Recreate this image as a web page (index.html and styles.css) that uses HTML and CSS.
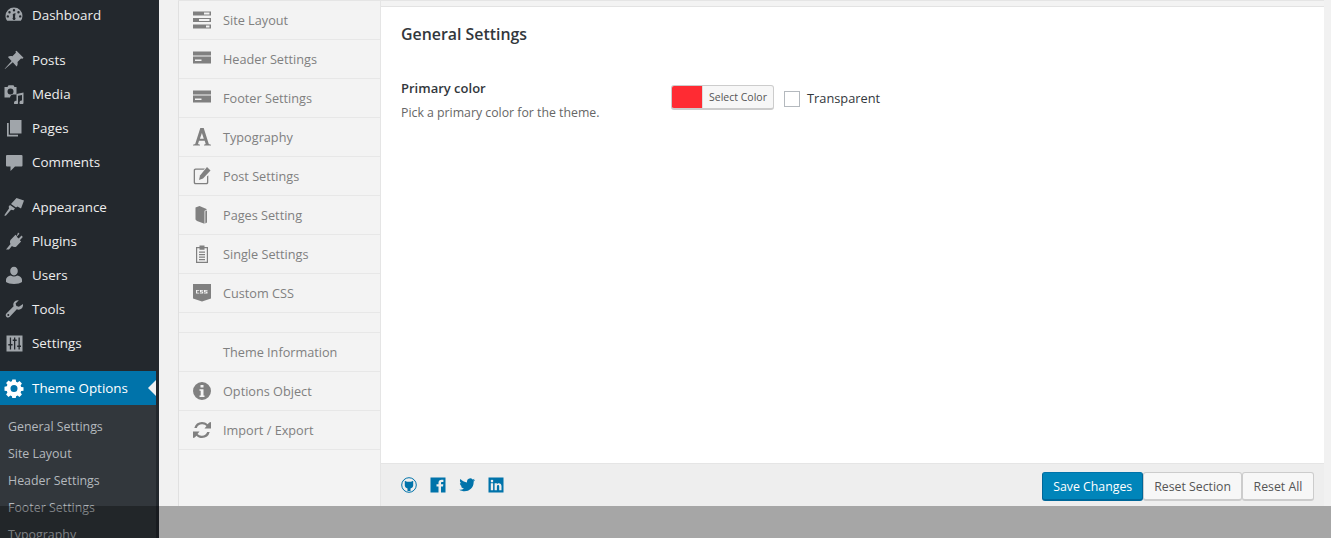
FILE: index.html
```html
<!DOCTYPE html>
<html lang="en">
<head>
<meta charset="utf-8">
<title>General Settings</title>
<link rel="stylesheet" href="styles.css">
</head>
<body>
<div class="page">
  <aside class="sidebar">
    <ul class="menu">
      <li class="item"><svg class="mi" viewBox="0 0 20 20"><path fill-rule="evenodd" d="M10 2.500a8.500 8.500 0 0 0-8.500 8.500c0 1.900.6 3.500 1.700 4.800h13.600a8.400 8.400 0 0 0 1.700-4.800A8.500 8.500 0 0 0 10 2.500zM10 4a1.200 1.200 0 1 1 0 2.400A1.200 1.200 0 0 1 10 4zM5.500 6a1.200 1.200 0 1 1 0 2.400A1.200 1.200 0 0 1 5.500 6zm9 0a1.200 1.200 0 1 1 0 2.400 1.200 1.200 0 0 1 0-2.400zM3.800 10.200a1.200 1.200 0 1 1 0 2.400 1.200 1.200 0 0 1 0-2.400zm12.400 0a1.200 1.200 0 1 1 0 2.400 1.200 1.200 0 0 1 0-2.400zM8.800 9l2.700-1-.5 4.300a1.500 1.500 0 1 1-2 .1z"/></svg><span>Dashboard</span></li>
      <li class="item gap"><svg class="mi" viewBox="0 0 20 20"><path d="M12.500 .8l7 7-1 1-1.500-.4-3.500 3.500c.4 1.900.1 3.500-.9 4.500L8.800 12.200 1 19l-.3-.3 6.900-7.800L3.900 7.100c1-1 2.600-1.300 4.500-.9l3.500-3.500-.4-1.500z"/></svg><span>Posts</span></li>
      <li class="item"><svg class="mi" viewBox="0 0 20 20"><path fill-rule="evenodd" d="M.500 3h3l1-1.800h5L10.500 3h2v7.500H9.500A3.500 3.500 0 0 0 6 13.500H.500zm6 1.500a3 3 0 1 0 0 6 3 3 0 0 0 0-6z"/><path d="M19.500 8.500v10a2 2 0 1 1-1.500-1.900V11l-4 .7v7a2 2 0 1 1-1.500-1.900V10z"/></svg><span>Media</span></li>
      <li class="item"><svg class="mi" viewBox="0 0 20 20"><path d="M6 2h11.500v13.500H6z"/><path d="M3 5h1.700v11.800h9.300V18.500H3z"/></svg><span>Pages</span></li>
      <li class="item"><svg class="mi" viewBox="0 0 20 20"><path d="M3 3h14.500a1 1 0 0 1 1 1v9.500a1 1 0 0 1-1 1h-6.500l-4.500 4.500v-4.500H3a1 1 0 0 1-1-1V4a1 1 0 0 1 1-1z"/></svg><span>Comments</span></li>
      <li class="item gap"><svg class="mi" viewBox="0 0 20 20"><path d="M12.500 1L20 3.500l-3 8-1.800-1L13.500 9.500l-1.500 1-5-3.500zM6 8l5 3.500-1.500 1.800-2.500-.5L2 18.500.5 19l.3-1.500L5 11.500 4.700 9.500z"/></svg><span>Appearance</span></li>
      <li class="item"><svg class="mi" viewBox="0 0 20 20"><path d="M14 1.500l1.500 1.300-2.800 3 2 1.800 2.800-3 1.300 1.300-3 3.300 1.300 1.200-5 5.300c-1.300.5-3 .3-4.200-.6L5 18.500H2l4.500-5.500c-.7-1.200-.7-2.800 0-4l5-5.300L12.800 5z"/></svg><span>Plugins</span></li>
      <li class="item"><svg class="mi" viewBox="0 0 20 20"><path d="M10 1.800c2.300 0 3.800 1.900 3.800 4.200S12.300 10.500 10 10.500 6.200 8.300 6.200 6 7.700 1.800 10 1.800zM6.800 10.500c1.900 1.300 4.500 1.300 6.400 0 2.600.5 4.800 2 4.800 4.300V17c-1.500 1.300-4.500 2-8 2s-6.500-.7-8-2v-2.200c0-2.300 2.200-3.800 4.800-4.300z"/></svg><span>Users</span></li>
      <li class="item"><svg class="mi" viewBox="0 0 20 20"><path fill-rule="evenodd" d="M19 5c.3 2.200-.5 4.100-2.200 5-1.300.8-2.800.8-4 .3L5.800 17.800c-.9.900-2.400 1-3.300.1-1-.9-1-2.500-.1-3.400l7.200-7.200c-.5-1.300-.4-2.800.4-4 1-1.500 2.800-2.300 4.800-2l-3.200 3.200.8 2.500 2.500.7zM4.300 15a1 1 0 1 0 0 2 1 1 0 0 0 0-2z"/></svg><span>Tools</span></li>
      <li class="item"><svg class="mi" viewBox="0 0 20 20"><path fill-rule="evenodd" d="M2.500 2.500h16v16h-16zM5.800 4.500v6.500H4.300v1.500h1.500v4h1.300v-4h1.500V11H7.100V4.500zM10 4.500v2H8.700V8H10v8.500h1.300V8h1.400V6.500h-1.400v-2zM14.500 4.500v8h-1.300V14h1.300v2.500h1.300V14H17v-1.500h-1.200v-8z"/></svg><span>Settings</span></li>
      <li class="item gap current"><svg class="mi" viewBox="0 0 20 20"><path fill-rule="evenodd" d="M8.300 1.500h3.400l.4 2.300 1.500.6 1.900-1.300 2.400 2.400-1.300 1.900.6 1.500 2.300.4v3.400l-2.300.4-.6 1.500 1.300 1.900-2.400 2.400-1.900-1.300-1.500.6-.4 2.300H8.300l-.4-2.300-1.500-.6-1.900 1.300-2.400-2.400 1.300-1.900-.6-1.500-2.300-.4V8.700L2.800 8.300l.6-1.500-1.300-1.900 2.400-2.400 1.900 1.300 1.500-.6zM10 7a3.500 3.500 0 1 0 0 7 3.500 3.500 0 0 0 0-7z"/></svg><span>Theme Options</span></li>
    </ul>
    <ul class="submenu">
      <li>General Settings</li>
      <li>Site Layout</li>
      <li>Header Settings</li>
      <li>Footer Settings</li>
      <li>Typography</li>
    </ul>
  </aside>
  <main class="panel">
    <nav class="tabs">
      <a class="tab"><svg class="ti" viewBox="0 0 18 18"><path fill-rule="evenodd" d="M0 .5h18v4H0zM11 1.500v2h5.500v-2zM0 7h18v4H0zM6 8v2h10.500V8zM0 13.500h18v4H0zM13 14.500v2h3.500v-2z"/></svg><span>Site Layout</span></a>
      <a class="tab"><svg class="ti" viewBox="0 0 18 18"><path fill-rule="evenodd" d="M0 1.500h18v4H0zM0 6.500h18v7H0zM2 9.500v1.500h6.500V9.500z"/></svg><span>Header Settings</span></a>
      <a class="tab"><svg class="ti" viewBox="0 0 18 18"><path fill-rule="evenodd" d="M0 1.500h18v4H0zM0 6.500h18v7H0zM2 9.500v1.500h6.500V9.500z"/></svg><span>Footer Settings</span></a>
      <a class="tab"><svg class="ti" viewBox="0 0 18 18"><path fill-rule="evenodd" d="M7.300 0h3.400L15.800 16l2.200.7v.8h-7v-.8l1.700-.7-1-3.300H6L5 16l2 .7v.8H0v-.8l2.200-.7zM8.900 5L6.900 10.700h3.900z"/></svg><span>Typography</span></a>
      <a class="tab"><svg class="ti" viewBox="0 0 18 18"><path fill-rule="evenodd" d="M2.500 1.500h9.500l-1.300 1.300H2.800a1 1 0 0 0-.8.8v11.600c0 .4.400.8.800.8h10.400c.4 0 .8-.4.800-.8V9.500l1.300-1.300v7.300c0 1-.8 1.800-1.800 1.800H2.500c-1 0-1.800-.8-1.800-1.800V3.300c0-1 .8-1.800 1.800-1.800z"/><path d="M14 0l3.500 3.500-7.500 8L6 13l1-4.500z"/></svg><span>Post Settings</span></a>
      <a class="tab"><svg class="ti" viewBox="0 0 18 18"><path d="M2.500 1.500L6.500 0l7 3v1l-2 .8v13L4 15 2.500 13.500z"/><path d="M12.300 5.200l1.700-.7v12l-1.700 1z"/></svg><span>Pages Setting</span></a>
      <a class="tab"><svg class="ti" viewBox="0 0 18 18"><path fill-rule="evenodd" d="M3 2h3.500V.5h5V2H15v16H3zM4.200 3.300v13.400h9.600V3.300h-2.300v1.500h-5V3.300zM6 6.500h6v1.200H6zM6 9h6v1.200H6zM6 11.500h6v1.200H6zM6 14h6v1.200H6z"/></svg><span>Single Settings</span></a>
      <a class="tab"><svg class="ti" viewBox="0 0 18 18"><path fill-rule="evenodd" d="M0 0h18v14.500l-9 3-9-3zM3 6v3.500h3.300V8.700H4.200V6.800h2.100V6zM7 6v2.200h2V8.800H7v.7h3.200V7.500h-2V6.800h2V6zM11 6v2.200h2V8.800h-2v.7h3.500V7.500h-2.300V6.800h2.300V6z"/></svg><span>Custom CSS</span></a>
      <div class="tab-space"></div>
      <a class="tab"><span class="ti-none"></span><span>Theme Information</span></a>
      <a class="tab"><svg class="ti" viewBox="0 0 18 18"><path fill-rule="evenodd" d="M9 0a9 9 0 1 1 0 18A9 9 0 0 1 9 0zM7.500 3v2.600h3V3zM6.500 7.300v1.400h1.200v4.800H6.500V15h5v-1.500h-1V7.300z"/></svg><span>Options Object</span></a>
      <a class="tab"><svg class="ti" viewBox="0 0 18 18"><path d="M9 1c2.200 0 4.100.9 5.500 2.300L16.300 1.500 18 1v6.500h-6.500l2-2.400A5.600 5.600 0 0 0 9 3.300 5.700 5.700 0 0 0 3.800 7H1.300A8 8 0 0 1 9 1zM0 10.500h6.500l-2 2.400A5.600 5.600 0 0 0 9 14.700c2.400 0 4.400-1.500 5.200-3.700h2.500A8 8 0 0 1 9 17c-2.200 0-4.100-.9-5.500-2.300L1.700 16.500 0 17z"/></svg><span>Import / Export</span></a>
    </nav>
    <section class="content">
      <div class="strip"></div>
      <div class="body">
        <h2 class="title">General Settings</h2>
        <div class="field">
          <div class="label">
            <div class="name">Primary color</div>
            <div class="desc">Pick a primary color for the theme.</div>
          </div>
          <div class="control">
            <button class="color-btn" type="button"><span class="swatch"></span><span class="color-text">Select Color</span></button>
            <span class="check"></span>
            <span class="check-label">Transparent</span>
          </div>
        </div>
      </div>
      <footer class="bar">
        <div class="social">
          <svg class="si" viewBox="0 0 16 16"><circle cx="8" cy="8" r="7.300" fill="none" stroke="#0073aa" stroke-width="1"/><path fill="#0073aa" d="M3.800 3.800l2.200 1h4l2.200-1v4.700c0 1.500-1.400 2.600-2.700 3V14H6.500v-2.500c-1.300-.4-2.700-1.500-2.700-3z"/></svg>
          <svg class="si" viewBox="0 0 16 16"><path fill="#0073aa" fill-rule="evenodd" d="M.5.500h15v15h-15zM8.500 15.500h2.500V9.500h2l.3-2.300H11V6c0-.7.2-1.100 1.100-1.100h1.300V2.800c-.3 0-1-.1-1.800-.1-1.900 0-3.100 1.100-3.100 3.100v1.400h-2v2.300h2z"/></svg>
          <svg class="si" viewBox="0 0 16 16"><path fill="#0073aa" d="M16 3c-.6.300-1.200.4-1.800.5.600-.4 1.100-1 1.400-1.800-.6.400-1.300.6-2 .8a3.200 3.200 0 0 0-5.500 2.900C5.400 5.300 3 4 1.400 2.100c-.9 1.500-.4 3.300.9 4.200-.5 0-1-.1-1.400-.4 0 1.600 1.100 3 2.600 3.300-.5.100-1 .1-1.500 0 .4 1.300 1.600 2.200 3 2.300A6.500 6.500 0 0 1 .2 12.700c7 4 15-.6 14.400-8.100.6-.4 1-.9 1.400-1.600z"/></svg>
          <svg class="si" viewBox="0 0 16 16"><path fill="#0073aa" fill-rule="evenodd" d="M.5.500h15v15h-15zM2.800 6.300v7h2.300v-7zM4 2.800a1.300 1.300 0 1 0 0 2.600 1.300 1.300 0 0 0 0-2.600zM6.600 6.300v7h2.300V9.700c0-1 .4-1.700 1.200-1.700s1.100.6 1.100 1.600v3.700h2.300V9.200c0-2-1.100-3-2.600-3-1.100 0-1.700.5-2 1.100V6.300z"/></svg>
        </div>
        <div class="actions">
          <button class="btn primary" type="button">Save Changes</button>
          <button class="btn" type="button">Reset Section</button>
          <button class="btn" type="button">Reset All</button>
        </div>
      </footer>
    </section>
  </main>
</div>
<div class="shade"></div>
</body>
</html>
```

FILE: styles.css
```css
* { box-sizing: border-box; }
html, body { margin: 0; height: 538px; overflow: hidden; }
body { background: #f1f1f1; font-family: "Open Sans", "Noto Sans", sans-serif; position: relative; }
.page { display: flex; height: 538px; }

.sidebar { width: 159px; flex: none; background: #23282d; overflow: hidden; }
.menu, .submenu { list-style: none; margin: 0; padding: 0; width: 156px; }
.menu { margin-top: -2px; }
.item { display: flex; align-items: center; height: 34px; padding-left: 4px; gap: 8px; color: #eee; font-size: 13.4px; position: relative; }
.item.gap { margin-top: 11px; }
.mi { width: 20px; height: 20px; fill: #a0a5aa; flex: none; }
.current { background: #0073aa; color: #fff; }
.current .mi { fill: #fff; }
.current::after { content: ""; position: absolute; right: 0; top: 9px; border: 8px solid transparent; border-left: 0; border-right-color: #f1f1f1; }
.submenu { background: #32373c; padding-top: 8px; }
.submenu li { height: 27px; line-height: 27px; padding-left: 8px; font-size: 12.4px; color: #b4b9be; }

.panel { margin-left: 19px; width: 1146px; height: 506px; display: flex; border-top: 1px solid #e5e5e5; background: #f3f3f3; }
.tabs { width: 203px; flex: none; border-left: 1px solid #e0e0e0; border-right: 1px solid #e5e5e5; display: flex; flex-direction: column; background: #f3f3f3; }
.tab { display: flex; align-items: center; height: 39px; padding-left: 14px; gap: 12px; border-bottom: 1px solid #e7e7e7; color: #808080; font-size: 12.7px; font-weight: 500; }
.tab-space { height: 20px; border-bottom: 1px solid #e7e7e7; }
.ti { width: 18px; height: 18px; fill: #808080; flex: none; }
.ti-none { width: 18px; flex: none; }

.content { flex: 1; display: flex; flex-direction: column; min-width: 0; }
.strip { height: 6px; background: #f3f3f3; border-bottom: 1px solid #e3e3e3; flex: none; }
.body { flex: 1; background: #fff; padding: 17px 20px 0; }
.title { margin: 0; font-size: 15.9px; line-height: 20px; font-weight: 600; color: #32373c; }
.field { display: flex; margin-top: 34px; }
.label { width: 270px; flex: none; }
.name { font-size: 13px; line-height: 20px; font-weight: 600; color: #32373c; }
.desc { font-size: 12.300px; line-height: 20px; margin-top: 5px; color: #666; }
.control { display: flex; align-items: flex-start; padding-top: 7px; }
.color-btn { display: flex; width: 103px; height: 25px; padding: 0; margin: 0; border: 1px solid #ccc; border-bottom-width: 2px; border-radius: 3px; background: #f7f7f7; overflow: hidden; font-family: inherit; }
.swatch { width: 30px; height: 100%; background: #ff2b33; flex: none; }
.color-text { flex: 1; border-left: 1px solid #ddd; font-size: 10.500px; line-height: 22px; color: #555; text-align: center; }
.check { width: 16px; height: 16px; margin: 6px 0 0 10px; border: 1px solid #b4b9be; background: #fff; flex: none; }
.check-label { margin: 4px 0 0 7px; font-size: 12.800px; line-height: 18px; color: #32373c; }

.bar { height: 43px; flex: none; background: #eee; border-top: 1px solid #e5e5e5; display: flex; justify-content: space-between; align-items: flex-start; padding: 8px 10px 0 20px; }
.social { display: flex; gap: 13px; padding-top: 5px; }
.si { width: 16px; height: 16px; flex: none; }
.actions { display: flex; }
.btn { height: 29px; min-width: 72px; padding: 0 10px; border: 1px solid #ccc; border-bottom-width: 2px; border-radius: 3px; background: #f7f7f7; color: #555; font-family: inherit; font-size: 12.300px; }
.btn.primary { background: #0085ba; border-color: #0073aa #006799 #006799; color: #fff; }

.shade { position: absolute; left: 0; right: 0; top: 506px; height: 32px; background: rgba(0, 0, 0, .31); }
```
